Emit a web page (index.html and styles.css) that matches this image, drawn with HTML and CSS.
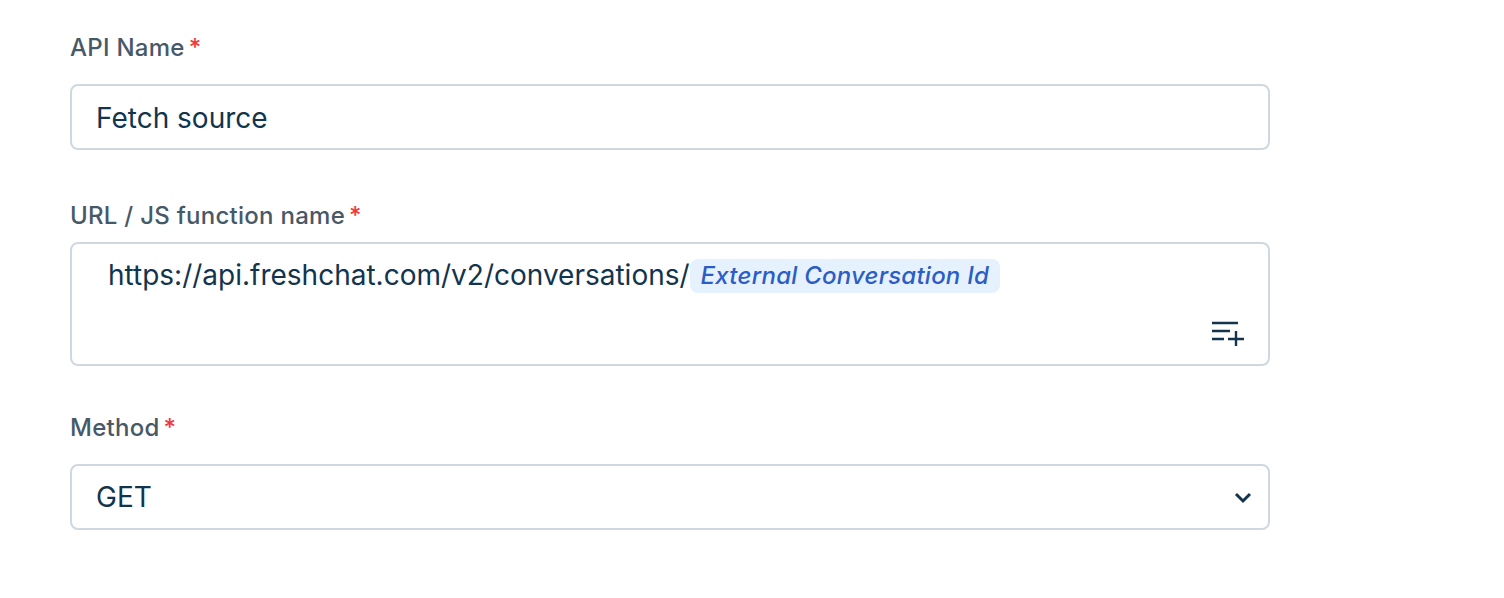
FILE: index.html
```html
<!DOCTYPE html>
<html>

<head lang="en">
    <meta charset="UTF-8">
    <title>API settings</title>
    <link rel="stylesheet" href="styles.css">
</head>

<body>
    <form class="api-form">
        <div class="form-field">
            <label class="form-label">API Name<span class="required">*</span></label>
            <div class="form-control">Fetch source</div>
        </div>
        <div class="form-field url-field">
            <label class="form-label">URL / JS function name<span class="required">*</span></label>
            <div class="form-control url-control">
                <div class="url-value">https://api.freshchat.com/v2/conversations/<span class="token">External Conversation Id</span></div>
                <svg class="insert-icon" width="34" height="26" viewBox="0 0 34 26" fill="none" stroke="#12344d" stroke-width="2.4">
                    <path d="M1 3h26M1 11h18M1 19h12M17 19h16M25 11v15" />
                </svg>
            </div>
        </div>
        <div class="form-field">
            <label class="form-label">Method<span class="required">*</span></label>
            <div class="form-control select-control">
                GET
                <svg class="chevron" width="18" height="12" viewBox="0 0 18 12" fill="none" stroke="#12344d" stroke-width="3">
                    <path d="M2 2l7 7 7-7" />
                </svg>
            </div>
        </div>
    </form>
</body>

</html>
```

FILE: styles.css
```css
/* page */
body {
    margin: 0;
    background: #ffffff;
    font-family: Inter, "Liberation Sans", sans-serif;
}

.api-form {
    width: 1200px;
    padding: 32px 0 0 70px;
}

.form-field {
    margin-bottom: 50px;
}

/* labels */
.form-label {
    display: block;
    height: 32px;
    margin-bottom: 20px;
    font-size: 24px;
    font-weight: 500;
    letter-spacing: 0.27px;
    line-height: 32px;
    color: #475867;
}

.required {
    margin-left: 4px;
    color: #f0393e;
}

/* inputs */
.form-control {
    display: flex;
    align-items: center;
    box-sizing: border-box;
    height: 66px;
    padding: 2px 24px 0;
    border: 2px solid #cfd7df;
    border-radius: 8px;
    font-size: 28px;
    color: #12344d;
}

.url-field {
    margin-bottom: 46px;
}

.url-field .form-label {
    margin-bottom: 10px;
}

.url-control {
    display: block;
    position: relative;
    height: 124px;
    padding: 12px 36px;
}

.url-value {
    line-height: 38px;
}

.token {
    display: inline-block;
    padding: 0 11px;
    border-radius: 8px;
    background: #e5f2fd;
    font-size: 24px;
    font-style: italic;
    font-weight: 500;
    letter-spacing: 0.22px;
    line-height: 34px;
    vertical-align: 1px;
    color: #2c5cc5;
}

.insert-icon {
    position: absolute;
    right: 23px;
    bottom: 18px;
}

.select-control {
    justify-content: space-between;
    padding-top: 0;
}

.chevron {
    margin-top: 2px;
    margin-right: -8px;
}
```
